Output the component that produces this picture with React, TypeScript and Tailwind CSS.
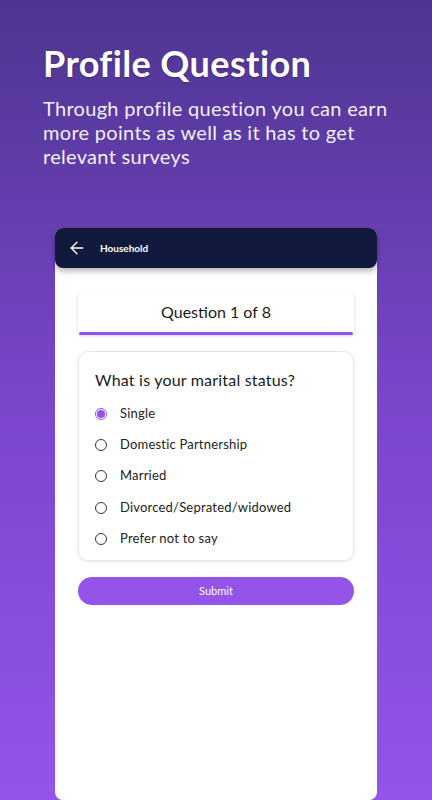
import { ArrowLeft } from "lucide-react";

const options = [
  "Single",
  "Domestic Partnership",
  "Married",
  "Divorced/Seprated/widowed",
  "Prefer not to say",
];

export default function App() {
  return (
    <div
      className="w-[432px] h-[800px] overflow-hidden flex flex-col bg-gradient-to-b from-[#4e3590] via-[#7a46cc] to-[#9454ea]"
      style={{ fontFamily: "Lato, 'Open Sans', sans-serif" }}
    >
      {/* heading */}
      <div className="px-[43px] pt-[42px]">
        <h1 className="text-[36px] leading-[42px] font-bold text-white tracking-[0.4px] [text-shadow:0_1px_2px_rgba(0,0,0,0.25)]">
          Profile Question
        </h1>
        <p className="mt-[12px] text-[20px] leading-[24px] text-white/95 tracking-[0.3px]">
          Through profile question you can earn more points as well as it has to get relevant surveys
        </p>
      </div>

      {/* phone screen */}
      <div className="mt-[60px] mx-[55px] flex-1 bg-white rounded-[8px] flex flex-col">
        <div className="h-[40px] bg-[#111a3d] rounded-[8px] flex items-center px-[12px] gap-[13px] shadow-[0_3px_6px_rgba(0,0,0,0.3)]">
          <ArrowLeft className="w-[20px] h-[20px] text-white" strokeWidth={1.6} />
          <span className="text-[10px] font-bold text-white">Household</span>
        </div>

        <div className="px-[23px] pt-[23px] flex flex-col">
          <div className="h-[44px] rounded-[3px] bg-white shadow-[0_1px_3px_rgba(0,0,0,0.18)] flex flex-col">
            <div className="flex-1 flex items-center justify-center text-[16px] text-[#1a1a1a]">
              Question 1 of 8
            </div>
            <div className="h-[3px] mx-[1px] bg-[#9454ea] rounded-full" />
          </div>

          <div className="mt-[16px] rounded-[10px] border border-[#e6e6e6] shadow-[0_1px_3px_rgba(0,0,0,0.1)] pt-[18px] pb-[6px] px-[16px]">
            <p className="text-[16px] leading-[20px] text-[#1a1a1a] tracking-[0.2px]">What is your marital status?</p>
            <div className="mt-[8px] flex flex-col">
              {options.map((o, i) => (
                <div key={o} className="h-[31.3px] flex items-center gap-[13px]">
                  {i === 0 ? (
                    <span className="w-[12px] h-[12px] rounded-full border border-[#9454ea] flex items-center justify-center">
                      <span className="w-[8px] h-[8px] rounded-full bg-[#9454ea]" />
                    </span>
                  ) : (
                    <span className="w-[12px] h-[12px] rounded-full border border-[#333]" />
                  )}
                  <span className="text-[13px] text-[#222] tracking-[0.2px]">{o}</span>
                </div>
              ))}
            </div>
          </div>

          <button className="mt-[16px] h-[28px] rounded-full bg-[#9454ea] text-white text-[11px]">
            Submit
          </button>
        </div>
      </div>
    </div>
  );
}
